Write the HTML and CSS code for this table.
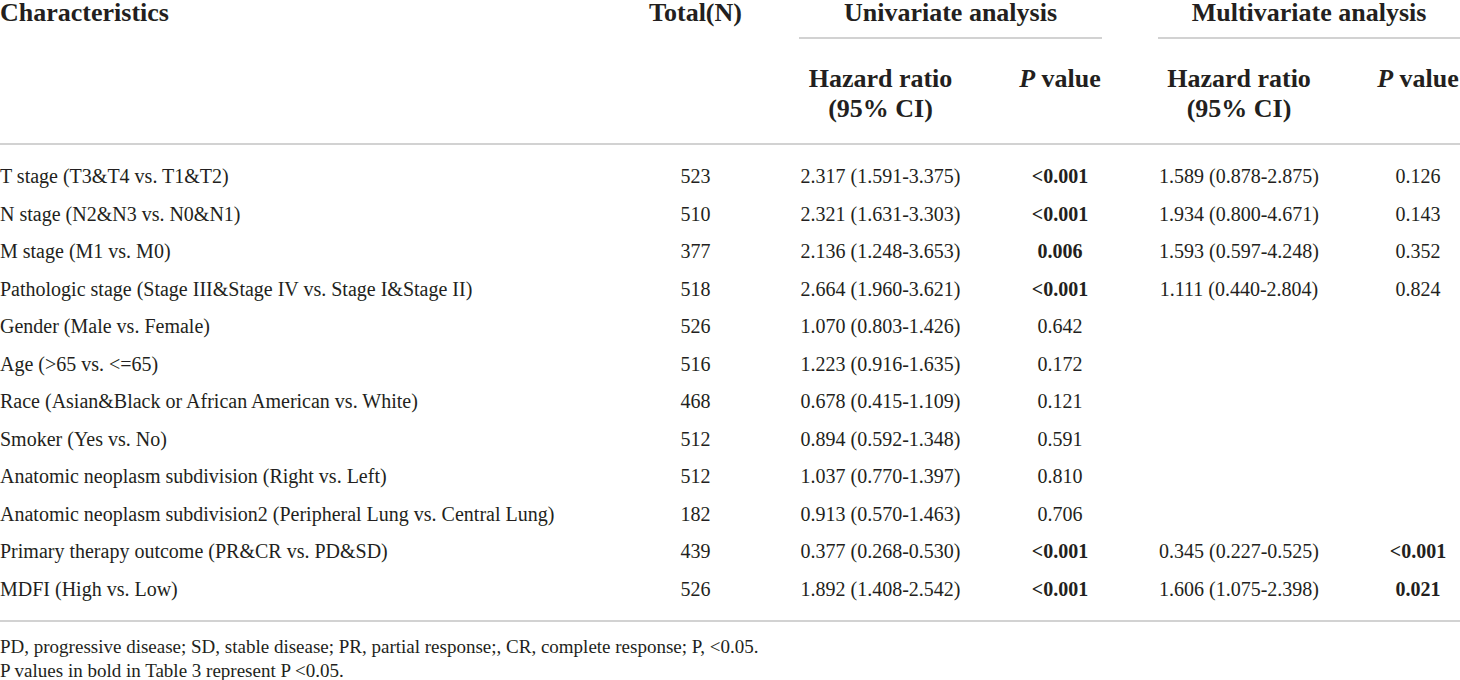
FILE: index.html
```html
<!DOCTYPE html>
<html lang="en">
<head>
<meta charset="utf-8">
<title>Table 3</title>
<link rel="stylesheet" href="styles.css">
</head>
<body>
<table class="tbl">
  <colgroup>
    <col class="c-char">
    <col class="c-total">
    <col class="c-hr">
    <col class="c-p">
    <col class="c-hr2">
    <col class="c-p2">
  </colgroup>
  <thead>
    <tr class="h1">
      <th class="first" rowspan="2">Characteristics</th>
      <th rowspan="2">Total(N)</th>
      <th colspan="2"><div class="span">Univariate analysis</div></th>
      <th class="last" colspan="2"><div class="span">Multivariate analysis</div></th>
    </tr>
    <tr class="h2">
      <th>Hazard ratio<br>(95% CI)</th>
      <th><i>P</i> value</th>
      <th>Hazard ratio<br>(95% CI)</th>
      <th class="last"><i>P</i> value</th>
    </tr>
  </thead>
  <tbody>
    <tr><td class="first">T stage (T3&amp;T4 vs. T1&amp;T2)</td><td>523</td><td>2.317 (1.591-3.375)</td><td class="b">&lt;0.001</td><td>1.589 (0.878-2.875)</td><td class="last">0.126</td></tr>
    <tr><td class="first">N stage (N2&amp;N3 vs. N0&amp;N1)</td><td>510</td><td>2.321 (1.631-3.303)</td><td class="b">&lt;0.001</td><td>1.934 (0.800-4.671)</td><td class="last">0.143</td></tr>
    <tr><td class="first">M stage (M1 vs. M0)</td><td>377</td><td>2.136 (1.248-3.653)</td><td class="b">0.006</td><td>1.593 (0.597-4.248)</td><td class="last">0.352</td></tr>
    <tr><td class="first">Pathologic stage (Stage III&amp;Stage IV vs. Stage I&amp;Stage II)</td><td>518</td><td>2.664 (1.960-3.621)</td><td class="b">&lt;0.001</td><td>1.111 (0.440-2.804)</td><td class="last">0.824</td></tr>
    <tr><td class="first">Gender (Male vs. Female)</td><td>526</td><td>1.070 (0.803-1.426)</td><td>0.642</td><td></td><td class="last"></td></tr>
    <tr><td class="first">Age (&gt;65 vs. &lt;=65)</td><td>516</td><td>1.223 (0.916-1.635)</td><td>0.172</td><td></td><td class="last"></td></tr>
    <tr><td class="first">Race (Asian&amp;Black or African American vs. White)</td><td>468</td><td>0.678 (0.415-1.109)</td><td>0.121</td><td></td><td class="last"></td></tr>
    <tr><td class="first">Smoker (Yes vs. No)</td><td>512</td><td>0.894 (0.592-1.348)</td><td>0.591</td><td></td><td class="last"></td></tr>
    <tr><td class="first">Anatomic neoplasm subdivision (Right vs. Left)</td><td>512</td><td>1.037 (0.770-1.397)</td><td>0.810</td><td></td><td class="last"></td></tr>
    <tr><td class="first">Anatomic neoplasm subdivision2 (Peripheral Lung vs. Central Lung)</td><td>182</td><td>0.913 (0.570-1.463)</td><td>0.706</td><td></td><td class="last"></td></tr>
    <tr><td class="first">Primary therapy outcome (PR&amp;CR vs. PD&amp;SD)</td><td>439</td><td>0.377 (0.268-0.530)</td><td class="b">&lt;0.001</td><td>0.345 (0.227-0.525)</td><td class="b last">&lt;0.001</td></tr>
    <tr><td class="first">MDFI (High vs. Low)</td><td>526</td><td>1.892 (1.408-2.542)</td><td class="b">&lt;0.001</td><td>1.606 (1.075-2.398)</td><td class="b last">0.021</td></tr>
  </tbody>
</table>
<div class="notes">
  <p>PD, progressive disease; SD, stable disease; PR, partial response;, CR, complete response; P, &lt;0.05.</p>
  <p>P values in bold in Table 3 represent P &lt;0.05.</p>
</div>
</body>
</html>
```
FILE: styles.css
```css
html, body {
  margin: 0;
  padding: 0;
  background: #ffffff;
}
body {
  font-family: "Liberation Serif", "Times New Roman", serif;
  color: #231f20;
  width: 1460px;
}
.tbl {
  width: 1460px;
  table-layout: fixed;
  border-collapse: collapse;
  border-spacing: 0;
}
.c-char { width: 620px; }
.c-total { width: 151px; }
.c-hr { width: 219px; }
.c-p { width: 140px; }
.c-hr2 { width: 218px; }
.c-p2 { width: 112px; }

.tbl th, .tbl td {
  padding: 0 28px;
  text-align: center;
  white-space: nowrap;
}
.tbl .first {
  padding-left: 0;
  text-align: left;
}
.tbl .last {
  padding-right: 0;
}
.tbl th {
  font-size: 26px;
  font-weight: bold;
  vertical-align: top;
}
.h1 th {
  line-height: 26px;
}
.span {
  padding-bottom: 11px;
  border-bottom: 2px solid #d2d2d2;
}
.h2 th {
  line-height: 30px;
  padding-top: 25px;
  padding-bottom: 19px;
}
.tbl thead {
  border-bottom: 2px solid #d2d2d2;
}
.tbl tbody {
  border-bottom: 2px solid #d2d2d2;
}
.tbl td {
  font-size: 20px;
  line-height: 37.5px;
}
.tbl tbody tr:first-child td {
  padding-top: 13px;
}
.tbl tbody tr:last-child td {
  padding-bottom: 12px;
}
.tbl td.b {
  font-weight: bold;
}
.notes {
  margin-top: 13px;
  font-size: 19px;
  line-height: 24px;
}
.notes p {
  margin: 0;
}
```
